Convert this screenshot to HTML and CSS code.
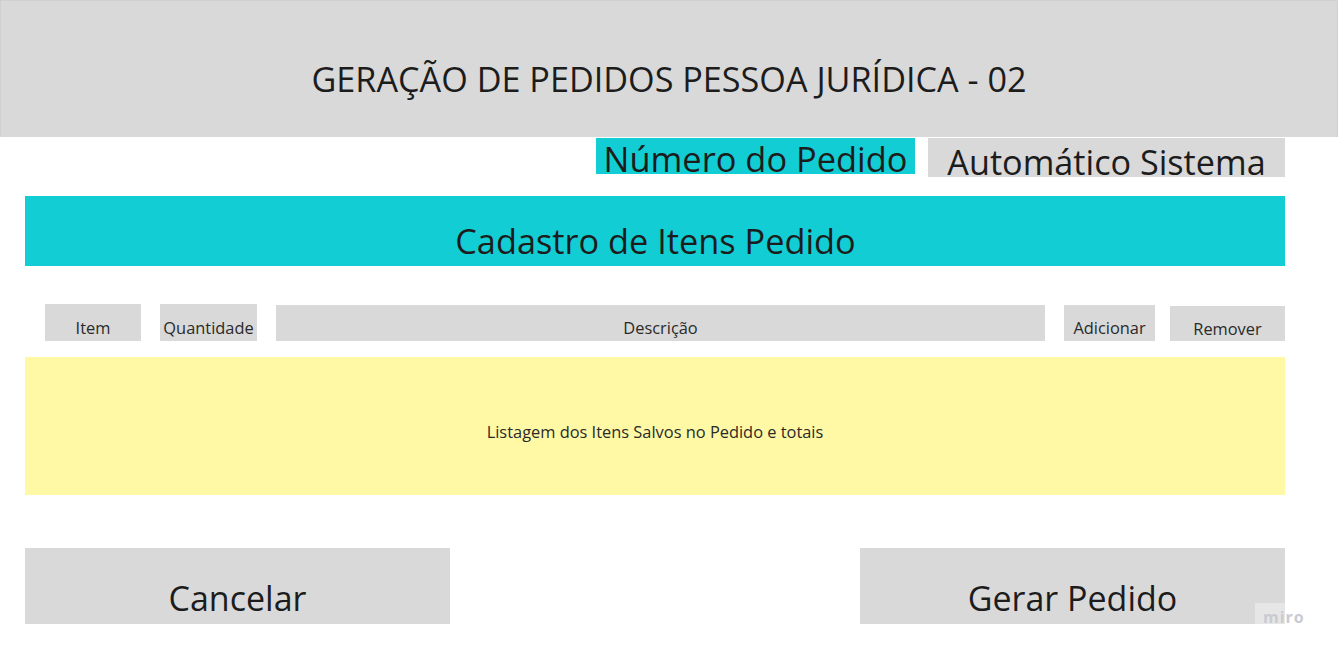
FILE: index.html
```html
<!DOCTYPE html>
<html lang="pt">
<head>
<meta charset="utf-8">
<title>Geração de Pedidos Pessoa Jurídica - 02</title>
<link rel="stylesheet" href="styles.css">
</head>
<body>
<header class="page-header">
  <h1 class="page-title">GERAÇÃO DE PEDIDOS PESSOA JURÍDICA - 02</h1>
</header>
<main class="content">
  <div class="order-number">
    <div class="order-label">Número do Pedido</div>
    <div class="order-value">Automático Sistema</div>
  </div>
  <div class="section-bar">Cadastro de Itens Pedido</div>
  <div class="fields">
    <div class="field f-item">Item</div>
    <div class="field f-qty">Quantidade</div>
    <div class="field f-desc">Descrição</div>
    <div class="field f-add">Adicionar</div>
    <div class="field f-rem">Remover</div>
  </div>
  <div class="listing">Listagem dos Itens Salvos no Pedido e totais</div>
  <div class="actions">
    <div class="btn">Cancelar</div>
    <div class="btn">Gerar Pedido</div>
  </div>
</main>
<div class="miro">miro</div>
</body>
</html>
```
FILE: styles.css
```css
* { box-sizing: border-box; }
html, body {
  margin: 0;
  padding: 0;
  background: #ffffff;
}
body {
  font-family: "Open Sans", "Liberation Sans", sans-serif;
  color: #1c1c1c;
  width: 1338px;
  height: 656px;
  overflow: hidden;
  position: relative;
}
.page-header {
  height: 137px;
  background: #d9d9d9;
  border: 1px solid #d0d0d0;
  border-bottom: none;
  display: flex;
  align-items: center;
  justify-content: center;
}
.page-title {
  margin: 0;
  padding-top: 21px;
  font-weight: 400;
  font-size: 34.2px;
  line-height: 1;
  color: #1c1c1c;
}
.content {
  width: 1260px;
  margin-left: 25px;
  display: flex;
  flex-direction: column;
}
.order-number {
  display: flex;
  justify-content: flex-end;
  align-items: flex-start;
  gap: 13px;
  margin-top: 1px;
}
.order-label {
  width: 319px;
  height: 36px;
  background: #12cdd4;
  font-size: 34.4px;
  line-height: 1;
  padding-top: 4px;
  text-align: center;
  white-space: nowrap;
}
.order-value {
  width: 357px;
  height: 39px;
  background: #d9d9d9;
  font-size: 34.2px;
  line-height: 1;
  padding-top: 7px;
  text-align: center;
  white-space: nowrap;
}
.section-bar {
  margin-top: 19px;
  height: 70px;
  background: #12cdd4;
  font-size: 34.3px;
  display: flex;
  align-items: center;
  justify-content: center;
  padding-top: 21px;
  padding-left: 1px;
  line-height: 1;
}
.fields {
  margin-top: 38px;
  padding-left: 20px;
  display: flex;
  align-items: flex-end;
  gap: 19px;
  height: 37px;
}
.field {
  background: #d9d9d9;
  font-size: 16.4px;
  line-height: 20px;
  display: flex;
  justify-content: center;
  align-items: flex-end;
  padding-bottom: 3px;
  white-space: nowrap;
  color: #2a2a2a;
}
.f-item { width: 96px; height: 37px; }
.f-qty { width: 97px; height: 37px; }
.f-desc { width: 769px; height: 36px; }
.f-add { width: 91px; height: 36px; padding-bottom: 3px; }
.f-rem { width: 115px; height: 35px; margin-left: -4px; padding-bottom: 2px; }
.listing {
  margin-top: 16px;
  height: 138px;
  background: #fff9a6;
  font-size: 16.4px;
  display: flex;
  align-items: center;
  justify-content: center;
  padding-top: 10px;
  color: #2a2a2a;
}
.actions {
  margin-top: 53px;
  display: flex;
  justify-content: space-between;
}
.btn {
  width: 425px;
  height: 76px;
  background: #d9d9d9;
  font-size: 34px;
  display: flex;
  align-items: center;
  justify-content: center;
  padding-top: 24px;
  line-height: 1;
}
.miro {
  position: absolute;
  left: 1255px;
  top: 603px;
  width: 55px;
  padding: 5px 0 3px 8px;
  background: rgba(255, 255, 255, 0.35);
  font-family: "Open Sans", sans-serif;
  font-weight: 700;
  font-size: 16px;
  line-height: 18px;
  letter-spacing: 1px;
  color: #c9cbd3;
}
```
